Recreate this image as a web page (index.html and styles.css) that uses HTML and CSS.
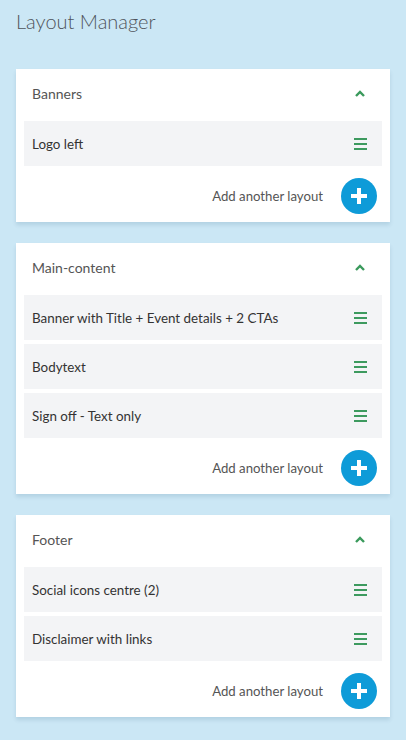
FILE: index.html
```html
<!DOCTYPE html>
<html lang="en">
<head>
    <meta charset="UTF-8">
    <meta name="viewport" content="width=device-width, initial-scale=1.0">
    <title>Layout Manager</title>
    <link rel="stylesheet" href="styles.css">
</head>
<body>

<h1 class="page-title">Layout Manager</h1>

<div class="section">
    <div class="section-head">
        <span>Banners</span>
        <svg class="chevron" width="10" height="7" viewBox="0 0 10 7"><path d="M1 6 L5 2 L9 6" fill="none" stroke="#3a9a5c" stroke-width="2.4"/></svg>
    </div>
    <div class="row">
        <span>Logo left</span>
        <svg class="handle" width="13" height="12" viewBox="0 0 13 12"><rect y="0" width="13" height="2"/><rect y="5" width="13" height="2"/><rect y="10" width="13" height="2"/></svg>
    </div>
    <div class="add">
        <span>Add another layout</span>
        <button class="add-btn"><svg width="18" height="18" viewBox="0 0 18 18"><path d="M9 1 V17 M1 9 H17" stroke="#fff" stroke-width="4"/></svg></button>
    </div>
</div>

<div class="section">
    <div class="section-head">
        <span>Main-content</span>
        <svg class="chevron" width="10" height="7" viewBox="0 0 10 7"><path d="M1 6 L5 2 L9 6" fill="none" stroke="#3a9a5c" stroke-width="2.4"/></svg>
    </div>
    <div class="row">
        <span>Banner with Title + Event details + 2 CTAs</span>
        <svg class="handle" width="13" height="12" viewBox="0 0 13 12"><rect y="0" width="13" height="2"/><rect y="5" width="13" height="2"/><rect y="10" width="13" height="2"/></svg>
    </div>
    <div class="row">
        <span>Bodytext</span>
        <svg class="handle" width="13" height="12" viewBox="0 0 13 12"><rect y="0" width="13" height="2"/><rect y="5" width="13" height="2"/><rect y="10" width="13" height="2"/></svg>
    </div>
    <div class="row">
        <span>Sign off - Text only</span>
        <svg class="handle" width="13" height="12" viewBox="0 0 13 12"><rect y="0" width="13" height="2"/><rect y="5" width="13" height="2"/><rect y="10" width="13" height="2"/></svg>
    </div>
    <div class="add">
        <span>Add another layout</span>
        <button class="add-btn"><svg width="18" height="18" viewBox="0 0 18 18"><path d="M9 1 V17 M1 9 H17" stroke="#fff" stroke-width="4"/></svg></button>
    </div>
</div>

<div class="section">
    <div class="section-head">
        <span>Footer</span>
        <svg class="chevron" width="10" height="7" viewBox="0 0 10 7"><path d="M1 6 L5 2 L9 6" fill="none" stroke="#3a9a5c" stroke-width="2.4"/></svg>
    </div>
    <div class="row">
        <span>Social icons centre (2)</span>
        <svg class="handle" width="13" height="12" viewBox="0 0 13 12"><rect y="0" width="13" height="2"/><rect y="5" width="13" height="2"/><rect y="10" width="13" height="2"/></svg>
    </div>
    <div class="row">
        <span>Disclaimer with links</span>
        <svg class="handle" width="13" height="12" viewBox="0 0 13 12"><rect y="0" width="13" height="2"/><rect y="5" width="13" height="2"/><rect y="10" width="13" height="2"/></svg>
    </div>
    <div class="add">
        <span>Add another layout</span>
        <button class="add-btn"><svg width="18" height="18" viewBox="0 0 18 18"><path d="M9 1 V17 M1 9 H17" stroke="#fff" stroke-width="4"/></svg></button>
    </div>
</div>

</body>
</html>
```

FILE: styles.css
```css
body {
    margin: 0;
    padding: 0 16px 20px;
    background-color: #cbe7f5;
    font-family: Lato, "Open Sans", sans-serif;
    color: #333;
}
.page-title {
    margin: 0;
    padding-top: 9px;
    height: 69px;
    font-size: 20px;
    font-weight: 300;
    color: #4f545b;
    box-sizing: border-box;
}
.section {
    background-color: #fff;
    padding: 0 8px 8px;
    margin-bottom: 21px;
    box-shadow: 0 3px 4px rgba(0, 60, 100, 0.12);
}
.section-head {
    height: 52px;
    display: flex;
    align-items: center;
    justify-content: space-between;
    padding: 0 17px 4px 8px;
    box-sizing: border-box;
    font-size: 14px;
    color: #555;
}
.row {
    height: 45px;
    display: flex;
    align-items: center;
    justify-content: space-between;
    padding: 0 15px 0 8px;
    margin-bottom: 4px;
    background-color: #f3f4f6;
    font-size: 13.4px;
    color: #333;
}
.handle {
    fill: #3d9a5f;
}
.add {
    display: flex;
    align-items: center;
    justify-content: flex-end;
    padding: 8px 5px 0 0;
    font-size: 13.2px;
    color: #555;
}
.add-btn {
    width: 36px;
    height: 36px;
    margin-left: 18px;
    border: none;
    border-radius: 50%;
    background-color: #0e9bd8;
    display: flex;
    align-items: center;
    justify-content: center;
    padding: 0;
    cursor: pointer;
}
```
